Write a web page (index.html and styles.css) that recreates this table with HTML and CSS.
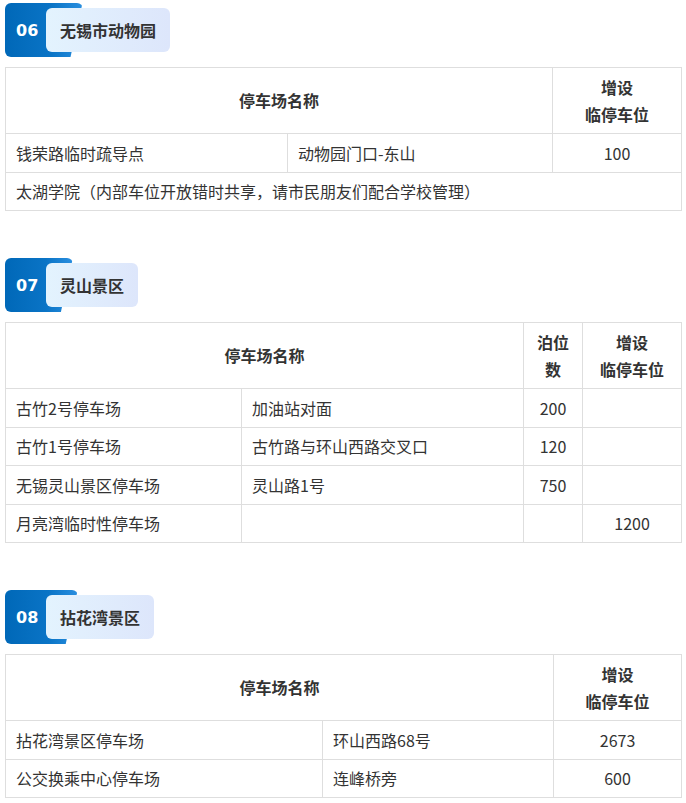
FILE: index.html
```html
<!DOCTYPE html>
<html lang="zh-CN">
<head>
<meta charset="utf-8">
<title>停车场</title>
<link rel="stylesheet" href="styles.css">
</head>
<body>
<section class="section">
  <div class="badge">
    <span class="badge-bg"></span>
    <span class="badge-num">06</span>
    <span class="badge-title">无锡市动物园</span>
  </div>
  <table class="tbl tbl-a">
    <colgroup><col class="a1"><col class="a2"><col class="a3"></colgroup>
    <tr><th colspan="2">停车场名称</th><th>增设<br>临停车位</th></tr>
    <tr><td>钱荣路临时疏导点</td><td>动物园门口-东山</td><td class="num">100</td></tr>
    <tr><td colspan="3">太湖学院（内部车位开放错时共享，请市民朋友们配合学校管理）</td></tr>
  </table>
</section>

<section class="section">
  <div class="badge">
    <span class="badge-bg"></span>
    <span class="badge-num">07</span>
    <span class="badge-title">灵山景区</span>
  </div>
  <table class="tbl tbl-b">
    <colgroup><col class="b1"><col class="b2"><col class="b3"><col class="b4"></colgroup>
    <tr><th colspan="2">停车场名称</th><th>泊位<br>数</th><th>增设<br>临停车位</th></tr>
    <tr><td>古竹2号停车场</td><td>加油站对面</td><td class="num">200</td><td></td></tr>
    <tr><td>古竹1号停车场</td><td>古竹路与环山西路交叉口</td><td class="num">120</td><td></td></tr>
    <tr><td>无锡灵山景区停车场</td><td>灵山路1号</td><td class="num">750</td><td></td></tr>
    <tr><td>月亮湾临时性停车场</td><td></td><td></td><td class="num">1200</td></tr>
  </table>
</section>

<section class="section">
  <div class="badge">
    <span class="badge-bg"></span>
    <span class="badge-num">08</span>
    <span class="badge-title">拈花湾景区</span>
  </div>
  <table class="tbl tbl-c">
    <colgroup><col class="c1"><col class="c2"><col class="c3"></colgroup>
    <tr><th colspan="2">停车场名称</th><th>增设<br>临停车位</th></tr>
    <tr><td>拈花湾景区停车场</td><td>环山西路68号</td><td class="num">2673</td></tr>
    <tr><td>公交换乘中心停车场</td><td>连峰桥旁</td><td class="num">600</td></tr>
  </table>
</section>
</body>
</html>
```

FILE: styles.css
```css
html, body {
  margin: 0;
  padding: 0;
  background: #fff;
}
body {
  padding: 3px 5px 0 5px;
  font-family: "Noto Sans CJK SC", "Noto Sans", sans-serif;
  color: #333;
}
.section {
  margin-bottom: 47px;
}
.section:last-child {
  margin-bottom: 0;
}
.badge {
  position: relative;
  display: inline-flex;
  height: 54px;
  box-sizing: border-box;
  padding: 5px 0 5px 41px;
  margin-bottom: 10px;
}
.badge-bg {
  position: absolute;
  left: 0;
  top: 0;
  height: 100%;
  width: calc(28px + 30%);
  border-radius: 6px;
  background: linear-gradient(90deg, #0068b8 0%, #0a74c6 60%, #2a8fe0 100%);
  clip-path: polygon(0 0, 100% 0, calc(100% - 12px) 100%, 0 100%);
}
.badge-num {
  position: absolute;
  left: 11px;
  top: 1px;
  height: 54px;
  line-height: 54px;
  font-family: "DejaVu Sans", sans-serif;
  font-weight: bold;
  font-size: 16px;
  color: #fff;
}
.badge-title {
  position: relative;
  display: flex;
  align-items: center;
  padding: 0 14px;
  border-radius: 6px;
  background: linear-gradient(90deg, #e3f3fe 0%, #dde6fb 100%);
  font-weight: bold;
  font-size: 16px;
  color: #333;
}
.tbl {
  width: 676px;
  border-collapse: collapse;
  table-layout: fixed;
  font-size: 16px;
}
.tbl th, .tbl td {
  border: 1px solid #dedede;
  padding: 5.5px 10px;
  line-height: 26.5px;
  text-align: left;
  vertical-align: middle;
  white-space: nowrap;
}
.tbl th {
  padding: 6px 10px;
  text-align: center;
  font-weight: bold;
  color: #333;
}
.tbl td.num {
  text-align: center;
}
.a1 { width: 282px; }
.a2 { width: 265px; }
.a3 { width: 129px; }
.b1 { width: 236px; }
.b2 { width: 282px; }
.b3 { width: 59px; }
.b4 { width: 99px; }
.c1 { width: 317px; }
.c2 { width: 231px; }
.c3 { width: 128px; }
```
